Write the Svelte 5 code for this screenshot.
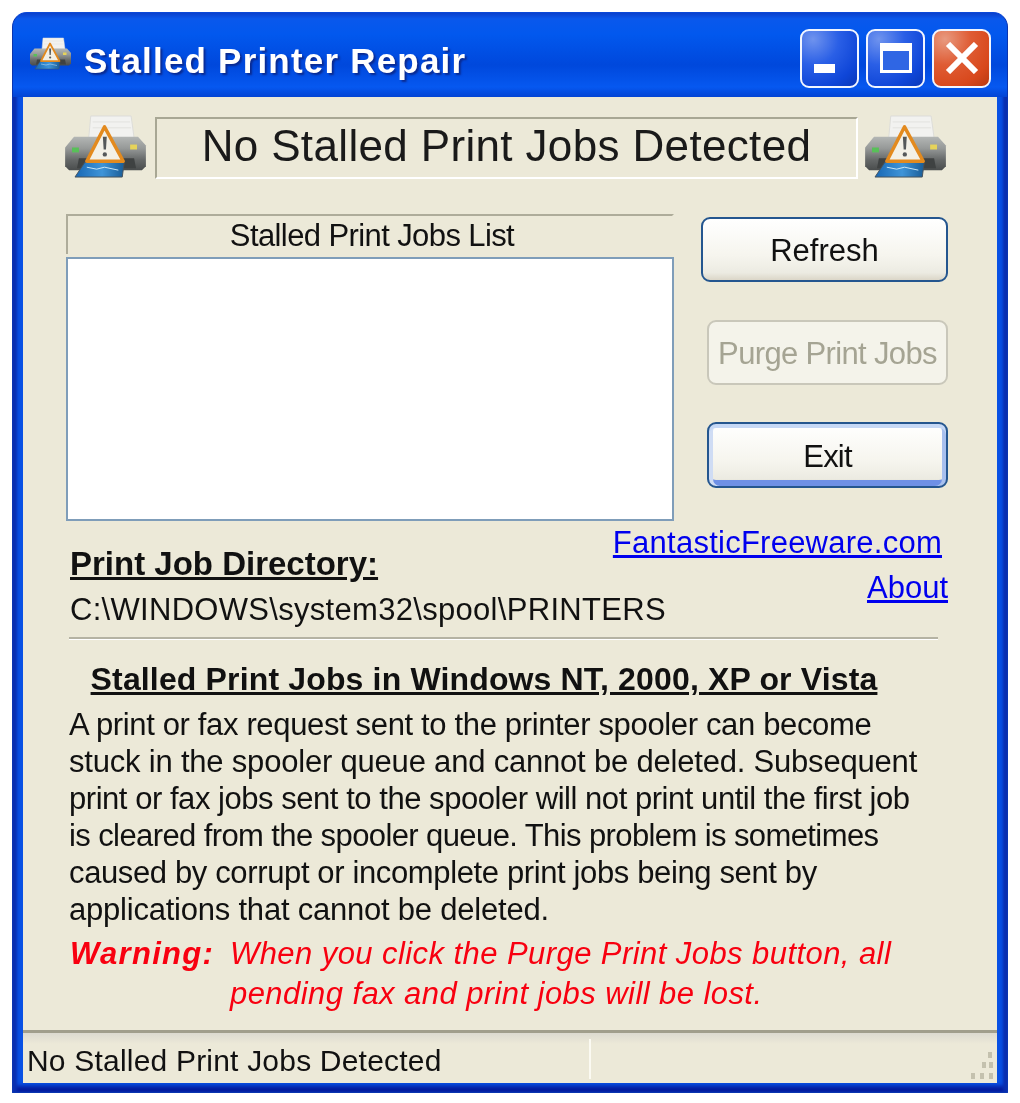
<script>
    // spacing per line keeps the original line widths, the source font is narrower than Arial
    const paragraph = [
        { text: 'A print or fax request sent to the printer spooler can become', spacing: -0.35 },
        { text: 'stuck in the spooler queue and cannot be deleted. Subsequent', spacing: -0.2 },
        { text: 'print or fax jobs sent to the spooler will not print until the first job', spacing: -0.46 },
        { text: 'is cleared from the spooler queue. This problem is sometimes', spacing: -0.6 },
        { text: 'caused by corrupt or incomplete print jobs being sent by', spacing: -0.37 },
        { text: 'applications that cannot be deleted.', spacing: -0.22 }
    ];
    const status = 'No Stalled Print Jobs Detected';
</script>

{#snippet printer(cls)}
    <svg class={cls} viewBox="0 0 84 66" aria-hidden="true">
        <defs>
            <linearGradient id="body" x1="0" y1="0" x2="0" y2="1">
                <stop offset="0" stop-color="#b4b7b5" />
                <stop offset="0.35" stop-color="#969998" />
                <stop offset="0.7" stop-color="#646767" />
                <stop offset="1" stop-color="#4a4d4d" />
            </linearGradient>
            <linearGradient id="tray" x1="0" y1="0" x2="1" y2="0">
                <stop offset="0" stop-color="#1767b4" />
                <stop offset="0.55" stop-color="#3f94d8" />
                <stop offset="1" stop-color="#1a5c96" />
            </linearGradient>
        </defs>
        <path d="M26 1h41l3 22H24z" fill="#f2f2f0" stroke="#dcdcd8" />
        <path d="M28 7h38M28 13h39" stroke="#e2e2de" />
        <path d="M0 33 9 22h65l8 9v21l-4 4H4l-4-4z" fill="url(#body)" />
        <path d="M14 44h56l2 10H12z" fill="#3f4242" />
        <rect x="7" y="33" width="7" height="5" fill="#58c058" />
        <rect x="66" y="30" width="7" height="5" fill="#e6d35a" />
        <path d="M20 48h40l-2 15H10z" fill="url(#tray)" stroke="#46525c" />
        <path d="M22 53l10 2 8-2 14 3" stroke="#c8e6f6" fill="none" />
        <path d="M40 12 59 47H22z" fill="#f3f0e6" stroke="#e38a1e" stroke-width="3.500" stroke-linejoin="round" />
        <path d="M38.300 22h4l-.8 13h-2.400z" fill="#55585a" />
        <circle cx="40.300" cy="40" r="2.200" fill="#55585a" />
    </svg>
{/snippet}

<div class="window">
    <header class="titlebar">
        {@render printer('title-icon')}
        <span class="title">Stalled Printer Repair</span>
        <div class="controls">
            <button class="ctl" aria-label="Minimize"><span class="min"></span></button>
            <button class="ctl" aria-label="Maximize"><span class="max"></span></button>
            <button class="ctl close" aria-label="Close">
                <svg viewBox="0 0 34 32"><path d="M3 2 31 30M31 2 3 30" stroke="#fff" stroke-width="6" /></svg>
            </button>
        </div>
    </header>

    <div class="client">
        <div class="banner">
            {@render printer('banner-icon')}
            <div class="banner-box">{status}</div>
            {@render printer('banner-icon')}
        </div>

        <div class="main">
            <div class="list-col">
                <div class="list-head">Stalled Print Jobs List</div>
                <div class="list"></div>
            </div>
            <div class="buttons">
                <button class="btn default">Refresh</button>
                <button class="btn disabled" disabled>Purge Print Jobs</button>
                <button class="btn focused">Exit</button>
            </div>
        </div>

        <div class="dir-row">
            <div class="dir">
                <div class="dir-label">Print Job Directory:</div>
                <div class="dir-path">C:\WINDOWS\system32\spool\PRINTERS</div>
            </div>
            <div class="links">
                <a href="#site" class="site">FantasticFreeware.com</a>
                <a href="#about">About</a>
            </div>
        </div>

        <hr class="rule" />

        <h2 class="heading">Stalled Print Jobs in Windows NT, 2000, XP or Vista</h2>
        <p class="para">
            {#each paragraph as line}
                <span style="letter-spacing: {line.spacing}px">{line.text}</span>
            {/each}
        </p>
        <div class="warning">
            <b>Warning:</b>
            <em>When you click the Purge Print Jobs button, all<br />pending fax and print jobs will be lost.</em>
        </div>

        <footer class="statusbar">
            <div class="status-text">{status}</div>
            <div class="status-rest">
                <svg class="grip" viewBox="0 0 30 30" aria-hidden="true">
                    <g fill="#c4c1ae">
                        <rect x="23" y="1" width="4" height="6" />
                        <rect x="17" y="11" width="4" height="6" />
                        <rect x="24" y="11" width="4" height="6" />
                        <rect x="6" y="22" width="4" height="6" />
                        <rect x="15" y="22" width="4" height="6" />
                        <rect x="24" y="22" width="4" height="6" />
                    </g>
                </svg>
            </div>
        </footer>
    </div>
</div>

<style>
    :global(body) {
        background: #fff;
        font-family: "Liberation Sans", Arial, sans-serif;
        color: #111;
    }
    .window {
        box-sizing: border-box;
        width: 996px;
        height: 1081px;
        margin: 12px 0 0 12px;
        display: flex;
        flex-direction: column;
        background: #0850e4;
        border: 1px solid #0a35b0;
        border-top-color: #0a48d8;
        border-radius: 15px 15px 1px 1px;
        padding: 0 10px 9px;
        box-shadow: inset 4px 0 3px #0a2fb0, inset -4px 0 3px #0a2fb0, inset 0 -6px 4px #041a9c;
        filter: blur(0.6px);
    }
    .titlebar {
        box-sizing: border-box;
        height: 84px;
        margin: 0 -10px;
        padding: 6px 16px 0 17px;
        display: flex;
        align-items: center;
        border-radius: 14px 14px 0 0;
        background: linear-gradient(#0a40cc 0, #0a58ec 7%, #0258ee 25%, #0048dc 62%, #0658f0 88%, #0344d4 100%);
    }
    .title-icon {
        width: 42px;
        height: 34px;
        margin-top: -8px;
    }
    .title {
        margin: 6px 0 0 12px;
        font-size: 35px;
        font-weight: 700;
        color: #fff;
        letter-spacing: 1.2px;
        text-shadow: 2px 2px 2px #0a2a90;
    }
    .controls {
        margin-left: auto;
        display: flex;
        gap: 7px;
    }
    .ctl {
        box-sizing: border-box;
        width: 59px;
        height: 59px;
        padding: 0;
        display: flex;
        align-items: center;
        justify-content: center;
        border: 2px solid #f2f6ff;
        border-radius: 9px;
        background: radial-gradient(circle at 20% 15%, #6f93ee 0, #2a5fe6 40%, #0f46d8 75%, #0a38b8 100%);
        position: relative;
    }
    .min {
        position: absolute;
        left: 12px;
        bottom: 13px;
        width: 21px;
        height: 9px;
        background: #fff;
    }
    .max {
        width: 32px;
        height: 30px;
        box-sizing: border-box;
        border: 3px solid #fff;
        border-top-width: 8px;
        background: #2f66e4;
    }
    .close {
        background: radial-gradient(circle at 20% 15%, #e89a80 0, #df5c34 40%, #d8481c 75%, #b83a12 100%);
    }
    .close svg {
        width: 34px;
        height: 32px;
    }

    .client {
        flex: 1;
        display: flex;
        flex-direction: column;
        background: #ece9d8;
        min-height: 0;
    }
    .banner {
        display: flex;
        align-items: flex-start;
        padding: 18px 49px 0 42px;
        gap: 7px;
    }
    .banner-icon {
        width: 83px;
        height: 65px;
        flex: none;
    }
    .banner-box {
        flex: 1;
        box-sizing: border-box;
        height: 62px;
        margin-top: 2px;
        padding-bottom: 4px;
        display: flex;
        align-items: center;
        justify-content: center;
        border: 2px solid;
        border-color: #a8a794 #fff #fff #a8a794;
        font-size: 44px;
        color: #1a1a1a;
        letter-spacing: 0.35px;
    }
    .main {
        display: flex;
        padding: 34px 49px 0 43px;
    }
    .list-col {
        width: 608px;
    }
    .list-head {
        box-sizing: border-box;
        height: 40px;
        padding-left: 4px;
        border: 2px solid;
        border-color: #aeac9a #ece9d8 #ece9d8 #aeac9a;
        border-bottom: 0;
        text-align: center;
        font-size: 31px;
        line-height: 40px;
        letter-spacing: -0.6px;
    }
    .list {
        box-sizing: border-box;
        height: 264px;
        margin-top: 3px;
        background: #fff;
        border: 2px solid #7f9db9;
    }
    .buttons {
        flex: 1;
        display: flex;
        flex-direction: column;
        align-items: flex-end;
        padding-top: 3px;
    }
    .btn {
        box-sizing: border-box;
        width: 241px;
        height: 65px;
        padding: 2px 0 0;
        font: inherit;
        font-size: 31px;
        color: #111;
        border: 2px solid #24568f;
        border-radius: 9px;
        background: linear-gradient(#fff 0, #f6f5ee 60%, #ecebe2 88%, #dbd6c8 100%);
    }
    .default {
        width: 247px;
    }
    .disabled {
        margin-top: 38px;
        border-color: #c9c7ba;
        background: #f4f3ea;
        color: #a5a493;
        letter-spacing: -0.65px;
    }
    .focused {
        margin-top: 37px;
        height: 66px;
        padding-top: 3px;
        letter-spacing: -0.8px;
        box-shadow: inset 0 4px 0 #c5d8f6, inset 4px 0 0 #cfdcf4, inset -4px 0 0 #a8c0ee, inset 0 -6px 0 #6e90e6;
    }
    .dir-row {
        display: flex;
        justify-content: space-between;
        padding: 3px 49px 0 47px;
        height: 116px;
        box-sizing: border-box;
    }
    .dir {
        width: 0;
        flex: none;
        padding-top: 20px;
        white-space: nowrap;
    }
    .dir-label {
        font-size: 33px;
        line-height: 40px;
        font-weight: 700;
        text-decoration: underline;
    }
    .dir-path {
        margin-top: 6px;
        font-size: 31px;
        line-height: 40px;
        letter-spacing: 0.3px;
    }
    .links {
        display: flex;
        flex-direction: column;
        align-items: flex-end;
        gap: 7px;
        font-size: 31px;
        line-height: 38px;
    }
    .links a {
        color: #0000ee;
    }
    .site {
        margin-right: 6px;
        letter-spacing: 0.25px;
    }
    .rule {
        width: 869px;
        margin: 0 0 0 46px;
        height: 3px;
        border: 0;
        background: linear-gradient(#b5b3a3 60%, #fff 60%);
    }
    .heading {
        margin: 20px 0 0 47px;
        width: 828px;
        text-align: center;
        font-size: 32px;
        line-height: 38px;
        font-weight: 700;
        letter-spacing: 0.15px;
        text-decoration: underline;
        white-space: nowrap;
    }
    .para {
        margin: 8px 0 0 46px;
        font-size: 31px;
        line-height: 37px;
    }
    .para span {
        display: block;
    }
    .warning {
        display: flex;
        margin: 6px 0 0 47px;
        color: #f80010;
        font-size: 31px;
        line-height: 40px;
    }
    .warning b {
        width: 160px;
        flex: none;
        font-style: italic;
        letter-spacing: 1.3px;
    }
    .warning em {
        letter-spacing: 0.43px;
    }
    .statusbar {
        margin-top: auto;
        height: 53px;
        display: flex;
        border-top: 3px solid #a09e8c;
        background: linear-gradient(#dcdad0 0, #ece9d8 22%);
        box-sizing: border-box;
        font-size: 30px;
    }
    .status-text {
        width: 562px;
        padding: 5px 0 0 4px;
        border-right: 2px solid #fbfaf2;
        margin: 6px 0 4px;
        letter-spacing: 0.2px;
        white-space: nowrap;
    }
    .status-rest {
        flex: 1;
        display: flex;
        justify-content: flex-end;
        align-items: flex-end;
    }
    .grip {
        width: 30px;
        height: 30px;
        margin: 0 2px 2px 0;
    }
</style>
